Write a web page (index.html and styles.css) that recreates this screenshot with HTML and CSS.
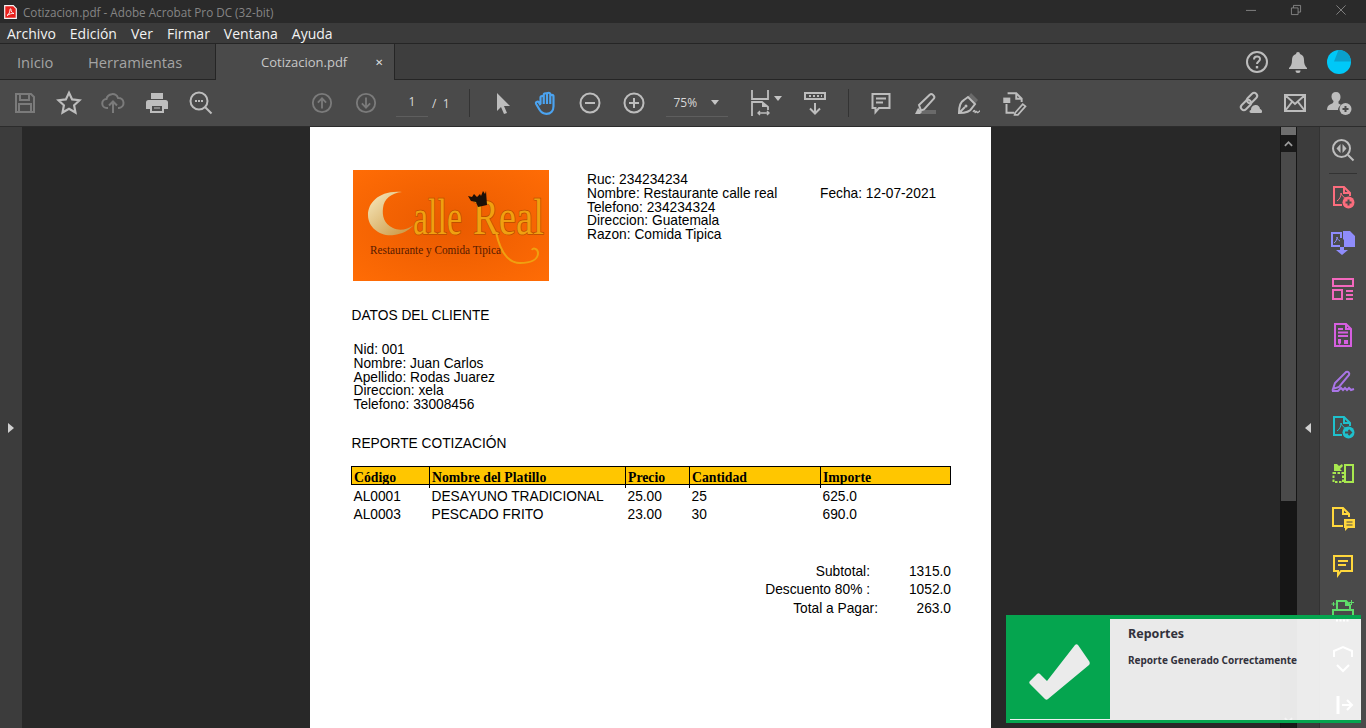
FILE: index.html
```html
<!DOCTYPE html>
<html lang="es">

<head>
    <meta charset="UTF-8">
    <meta name="viewport" content="width=device-width, initial-scale=1.0">
    <title>Cotizacion.pdf - Adobe Acrobat Pro DC (32-bit)</title>
    <link rel="stylesheet" href="styles.css">
</head>

<body>
    <div id="ventana">

        <!-- Barra de titulo -->
        <div id="barraTitulo">
            <svg class="logoAcrobat" viewBox="0 0 13 14" width="13" height="14">
                <path d="M.7.7h8.600l3 3v9.600H.7z" fill="#e8201c" stroke="#f5f5f5" stroke-width="1.200" />
                <path d="M3 10.500c2-1 3-4 3-6 0-1 1-1 1 0 0 2 1 3.500 3 4-2-.2-4.500.3-7 2z" fill="none"
                    stroke="#fff" stroke-width=".9" />
            </svg>
            <span class="tituloTexto">Cotizacion.pdf - Adobe Acrobat Pro DC (32-bit)</span>
            <div class="controles">
                <svg viewBox="0 0 12 12" width="10" height="10">
                    <path d="M0 6.500h12" />
                </svg>
                <svg viewBox="0 0 12 12" width="10" height="10">
                    <path d="M.5 3.500h8v8h-8zM3 3.500V.5h8.500v8H8.500" />
                </svg>
                <svg viewBox="0 0 12 12" width="10" height="10">
                    <path d="M.5.5l11 11M11.500.5l-11 11" />
                </svg>
            </div>
        </div>

        <!-- Menu -->
        <div id="barraMenu">
            <span>Archivo</span>
            <span>Edición</span>
            <span>Ver</span>
            <span>Firmar</span>
            <span>Ventana</span>
            <span>Ayuda</span>
        </div>

        <!-- Pestañas -->
        <div id="barraTabs">
            <span class="tab tabInicio">Inicio</span>
            <span class="tab tabHerramientas">Herramientas</span>
            <div class="tabActiva">
                <span>Cotizacion.pdf</span>
                <span class="tabCerrar">✕</span>
            </div>
            <div class="tabsDerecha">
                <svg class="ic" viewBox="0 0 24 24" width="24" height="24">
                    <circle cx="12" cy="12" r="10" />
                    <path d="M9 9.500c0-4 6-4 6-.5 0 2.500-3 2.500-3 5" />
                    <path class="relleno" d="M10.800 16h2.400v2.400h-2.400z" />
                </svg>
                <svg class="ic" viewBox="0 0 24 24" width="24" height="24">
                    <path class="relleno"
                        d="M12 2a2 2 0 0 1 2 2c3 1 4 3 4 6 0 4 1 6 3 8v1H3v-1c2-2 3-4 3-8 0-3 1-5 4-6a2 2 0 0 1 2-2zM9.500 20.500h5a2.500 2.500 0 0 1-5 0z" />
                </svg>
                <svg viewBox="0 0 24 24" width="24" height="24">
                    <circle cx="12" cy="12" r="12" fill="#00c8f8" />
                    <path d="M7 11.500L11.500 0a12 12 0 0 1 12.500 11.500z" fill="#0aa0cc" />
                </svg>
            </div>
        </div>

        <!-- Barra de herramientas -->
        <div id="barraHerramientas">
            <button class="btn"><svg class="ic apagado" viewBox="0 0 24 24" width="24" height="24">
                    <path d="M3 3h15l3 3v15H3zM7 3v6h9V3M6 21v-8h12v8" />
                </svg></button>
            <button class="btn"><svg class="ic" viewBox="0 0 24 24" width="26" height="26">
                    <path d="M12 2.500l2.900 6.200 6.800.8-5 4.600 1.300 6.700-6-3.400-6 3.400 1.300-6.700-5-4.600 6.800-.8z" />
                </svg></button>
            <button class="btn"><svg class="ic apagado" viewBox="0 0 24 24" width="24" height="24">
                    <path d="M7 17H6a4.500 4.500 0 0 1-.5-9 6 6 0 0 1 11.500-1 5 5 0 0 1 1 10h-1M12 22V11M8 14.500l4-4 4 4" />
                </svg></button>
            <button class="btn"><svg class="ic" viewBox="0 0 24 24" width="24" height="24">
                    <path class="relleno" fill-rule="evenodd"
                        d="M6 2h12v6H6zM3.500 9h17A2.500 2.500 0 0 1 23 11.500V18h-4v4H5v-4H1v-6.500A2.500 2.500 0 0 1 3.500 9zM7 15v5h10v-5zM9 16.500h6v1H9z" />
                </svg></button>
            <button class="btn"><svg class="ic" viewBox="0 0 24 24" width="24" height="24">
                    <circle cx="10" cy="10" r="8.500" />
                    <path d="M16 16l6.500 6.500" />
                    <path class="relleno" d="M6 9h2v2H6zM9 9h2v2H9zM12 9h2v2h-2z" />
                </svg></button>

            <button class="btn btnPagina"><svg class="ic apagado" viewBox="0 0 24 24" width="22" height="22">
                    <circle cx="12" cy="12" r="10" />
                    <path d="M12 18V7M7.500 11.500L12 7l4.500 4.500" />
                </svg></button>
            <button class="btn"><svg class="ic apagado" viewBox="0 0 24 24" width="22" height="22">
                    <circle cx="12" cy="12" r="10" />
                    <path d="M12 6v11M7.500 12.500L12 17l4.500-4.500" />
                </svg></button>
            <div class="paginaCampo">1</div>
            <span class="paginaTotal">/&nbsp; 1</span>
            <span class="separador sepUno"></span>

            <button class="btn"><svg class="ic" viewBox="0 0 24 24" width="24" height="24">
                    <path class="relleno" d="M6 2l13 13h-6l3 7-3 1-3-7-4 4z" />
                </svg></button>
            <button class="btn"><svg class="ic mano" viewBox="0 0 24 24" width="26" height="26">
                    <path
                        d="M6 13V7a1.500 1.500 0 0 1 3 0V4.500a1.500 1.500 0 0 1 3 0V4a1.500 1.500 0 0 1 3 0v2a1.500 1.500 0 0 1 3 0v9c0 4-2.500 7-6.500 7-3 0-5-1.500-6.500-4l-3-5c-1-2 1.500-3 2.500-1.500L6 14M9 7v6M12 4.500V13M15 5v8" />
                </svg></button>
            <button class="btn btnMenos"><svg class="ic" viewBox="0 0 24 24" width="24" height="24">
                    <circle cx="12" cy="12" r="9.500" />
                    <path d="M7 12h10" />
                </svg></button>
            <button class="btn"><svg class="ic" viewBox="0 0 24 24" width="24" height="24">
                    <circle cx="12" cy="12" r="9.500" />
                    <path d="M7 12h10M12 7v10" />
                </svg></button>
            <div class="zoomCampo"><span>75%</span><i class="flechita"></i></div>

            <button class="btn btnAjuste"><svg class="ic" viewBox="0 0 24 28" width="24" height="28">
                    <path d="M4 1v9h16V1M4 27V13h10l6 5v3" stroke-width="1.800" />
                    <path class="relleno" d="M14 13l6 5h-6z" />
                    <path d="M10 24h11M12 22l-2 2 2 2M19 22l2 2-2 2" stroke-width="1.400" />
                </svg><i class="flechita"></i></button>
            <button class="btn btnScroll"><svg class="ic" viewBox="0 0 24 24" width="24" height="24">
                    <path d="M2 2h20v6H2zM12 12v10M7 17.500l5 5 5-5" />
                    <path class="relleno" d="M6 4h2v2H6zM10 4h2v2h-2zM14 4h2v2h-2zM18 4h1v2h-1z" />
                </svg></button>
            <span class="separador sepDos"></span>

            <button class="btn"><svg class="ic" viewBox="0 0 24 24" width="24" height="24">
                    <path d="M3.500 3h17v14H10l-3.500 4v-4h-3zM7 7.500h10M7 11.500h7" />
                </svg></button>
            <button class="btn"><svg class="ic" viewBox="0 0 24 24" width="24" height="24">
                    <path class="apagadoRelleno" d="M8 19h15v4H6z" />
                    <path d="M6 14L17 3.500c1.500-1.500 5.500 1.500 4 4L11 18.500l-3 1z" />
                    <path class="relleno" d="M2 23l3-6 4 4-2 2z" />
                </svg></button>
            <button class="btn"><svg class="ic" viewBox="0 0 24 24" width="24" height="24">
                    <path class="apagadoRelleno" d="M11 6l3-4 7 7-3 4z" />
                    <path d="M2 22c0-6 1-11 5-13l4-3 7 7-3 4c-2 4-7 5-13 5zM2 22l6-6" />
                    <circle class="relleno" cx="9" cy="15" r="1.500" />
                    <path d="M16 21c1-2 2-2 2 0s1.500-2 2 0 2-1 3-1" stroke-width="1.300" />
                </svg></button>
            <button class="btn"><svg class="ic" viewBox="0 0 24 24" width="26" height="26">
                    <path d="M7 3h8l5 5v3M15 3v5h5M6 13v8h7" stroke-width="1.800" />
                    <path class="relleno" d="M3 7h6.500v5H3z" />
                    <path d="M14 21l7-8 2.500 2-7 8h-3z" stroke-width="1.600" />
                </svg></button>

            <div class="barraDerecha">
                <button class="btn"><svg class="ic" viewBox="0 0 26 24" width="26" height="24">
                        <rect x="8" y="4" width="12" height="6" rx="3" transform="rotate(-45 14 7)" />
                        <rect x="2" y="11" width="12" height="6" rx="3" transform="rotate(-45 8 14)" />
                        <path class="relleno" d="M13 22c-2 0-2-3 0-3 0-4 3-5 5-5 2 0 4 2 4 4 2 0 3 4 1 4z" />
                    </svg></button>
                <button class="btn"><svg class="ic" viewBox="0 0 24 24" width="24" height="24">
                        <path d="M2 4h20v16H2zM2 4l10 9 10-9M2 20l7-9M22 20l-7-9" />
                    </svg></button>
                <button class="btn"><svg class="ic" viewBox="0 0 26 24" width="26" height="24">
                        <path class="relleno"
                            d="M10 1c3 0 4.500 2 4.500 5 0 2-1 3.500-2 4.500v2c1 .5 2 1 2.500 1.500-2 1-3 3-3 5H1c0-3 1-5 4-6 2-.7 2.500-1.500 2.500-3-1-1-2-2.500-2-4.500 0-3 1.500-4.500 4.500-4.500z" />
                        <circle class="relleno" cx="19.500" cy="18" r="6" />
                        <path class="signo" d="M16.500 18h6M19.500 15v6" />
                    </svg></button>
            </div>
        </div>

        <!-- Area principal -->
        <div id="principal">
            <div class="lateralIzq"><i class="trianguloDer"></i></div>

            <div id="documento">
                <div class="pagina">
                    <div class="encabezado">
                        <svg class="logoEmpresa" viewBox="0 0 196 111" width="196" height="111">
                            <defs>
                                <radialGradient id="fondoLogo" cx="50%" cy="50%" r="70%">
                                    <stop offset="0" stop-color="#e95a00" />
                                    <stop offset="1" stop-color="#ff6c05" />
                                </radialGradient>
                                <linearGradient id="luna" x1="0" y1="0" x2="1" y2="1">
                                    <stop offset="0" stop-color="#f8ebc0" />
                                    <stop offset="1" stop-color="#c89038" />
                                </linearGradient>
                            </defs>
                            <rect width="196" height="111" fill="url(#fondoLogo)" />
                            <path d="M49 22C26 20 15 33 15 45c0 13 13 22 26 20 8-1 14-4 20-10-7 5-15 6-21 3-9-4-11-12-10-20 1-9 8-15 19-16z"
                                fill="url(#luna)" />
                            <text class="logoLetra" x="60" y="64" textLength="49" lengthAdjust="spacingAndGlyphs">alle</text>
                            <text class="logoLetra" x="120" y="64" textLength="71" lengthAdjust="spacingAndGlyphs">Real</text>
                            <path d="M143 62c3 14 9 31 24 31 10 0 18-3 18-10 0-4-5-6-6-3" fill="none" stroke="#f0a010"
                                stroke-width="2" />
                            <path d="M115 26l4 1 2-3 3 3 3-3 1 2 2-5 2 3 1-3 1 14-9 2-2-5-5-1z" fill="#1c1008" />
                            <text class="logoSub" x="17" y="84" textLength="131" lengthAdjust="spacingAndGlyphs">Restaurante y Comida Tipica</text>
                        </svg>
                        <div class="empresa">
                            <div>Ruc: 234234234</div>
                            <div class="empresaFila"><span class="empresaNombre">Nombre: Restaurante calle real</span><span>Fecha: 12-07-2021</span></div>
                            <div>Telefono: 234234324</div>
                            <div>Direccion: Guatemala</div>
                            <div>Razon: Comida Tipica</div>
                        </div>
                    </div>

                    <div class="seccionTitulo seccionCliente">DATOS DEL CLIENTE</div>
                    <div class="cliente">
                        <div>Nid: 001</div>
                        <div>Nombre: Juan Carlos</div>
                        <div>Apellido: Rodas Juarez</div>
                        <div>Direccion: xela</div>
                        <div>Telefono: 33008456</div>
                    </div>

                    <div class="seccionTitulo seccionReporte">REPORTE COTIZACIÓN</div>
                    <div class="tabla">
                        <div class="fila filaCabecera">
                            <span>Código</span>
                            <span>Nombre del Platillo</span>
                            <span>Precio</span>
                            <span>Cantidad</span>
                            <span>Importe</span>
                        </div>
                        <div class="fila">
                            <span>AL0001</span>
                            <span>DESAYUNO TRADICIONAL</span>
                            <span>25.00</span>
                            <span>25</span>
                            <span>625.0</span>
                        </div>
                        <div class="fila">
                            <span>AL0003</span>
                            <span>PESCADO FRITO</span>
                            <span>23.00</span>
                            <span>30</span>
                            <span>690.0</span>
                        </div>
                    </div>

                    <div class="totales">
                        <span class="totalEtiqueta">Subtotal:</span><span>1315.0</span>
                        <span class="totalEtiqueta">Descuento 80% :</span><span>1052.0</span>
                        <span>Total a Pagar:</span><span>263.0</span>
                    </div>
                </div>
            </div>

            <div class="scroll">
                <div class="scrollTope"></div>
                <div class="scrollFlecha"><svg viewBox="0 0 10 6" width="9" height="6">
                        <path d="M1 5l4-4 4 4" />
                    </svg></div>
                <div class="scrollBarra"></div>
                <div class="scrollFlecha scrollAbajo"><svg viewBox="0 0 10 6" width="9" height="6">
                        <path d="M1 1l4 4 4-4" />
                    </svg></div>
            </div>

            <div class="lateralDer"><i class="trianguloIzq"></i></div>

            <div id="panelDerecho">
                <div class="panelIcono"><svg class="ic" viewBox="0 0 24 24" width="24" height="24">
                        <circle cx="10.500" cy="10.500" r="8.500" />
                        <path d="M17 17l5.500 5.500" />
                        <path class="relleno" d="M9.500 6v9l-4-4.500zM11.500 6v9l4-4.500z" />
                    </svg></div>
                <div class="panelLinea"></div>
                <div class="panelIcono"><svg class="color" style="--c:#fb6d7d" viewBox="0 0 24 24" width="24" height="24">
                        <path d="M11 20H3V2h10l6 6v3M13 2v6h6" />
                        <path d="M6 16c3-2 4-5 4-8 1 3 2 4 5 5" stroke-width="1" />
                        <circle class="lleno" cx="17.500" cy="17.500" r="6" />
                        <path class="hueco" d="M14.500 17.500h6M17.500 14.500v6" />
                    </svg></div>
                <div class="panelIcono"><svg class="color" style="--c:#8f8cfb" viewBox="0 0 24 24" width="24" height="24">
                        <path d="M9 15H1V2h9v5" />
                        <path d="M3 12c2-1 3-4 3-6 .5 2 1 3 3 4" stroke-width="1" />
                        <path class="lleno" d="M12 0h7l5 5v11H13V9l-1-1zM9 16h4v3h4l-6 5-6-5h4z" />
                    </svg></div>
                <div class="panelIcono"><svg class="color" style="--c:#f268bd" viewBox="0 0 24 24" width="24" height="24">
                        <path d="M2 2h20v7H2zM2 13h9v9H2zM15 14h7M15 18h7M15 22h7" />
                    </svg></div>
                <div class="panelIcono"><svg class="color" style="--c:#d65fe0" viewBox="0 0 24 24" width="24" height="24">
                        <path d="M4 1h11l5 5v17H4zM15 1v5h5M7 6h5M7 9.500h10M7 13h10" />
                        <path class="lleno" d="M7 16h3v4l-1.500 2L7 20zM13 17h4v4h-4z" />
                    </svg></div>
                <div class="panelIcono"><svg class="color" style="--c:#a975e6" viewBox="0 0 24 24" width="24" height="24">
                        <path d="M2 20l2-6L15 3c2-1 4 1 3 3L8 18zM1 22h6l3-3 2 2 2-2 2 2 2-2 2 2 3-1" />
                    </svg></div>
                <div class="panelIcono"><svg class="color" style="--c:#1fc0cc" viewBox="0 0 24 24" width="24" height="24">
                        <path d="M11 20H3V2h10l6 6v3M13 2v6h6" />
                        <path d="M6 16c3-2 4-5 4-8 1 3 2 4 5 5" stroke-width="1" />
                        <circle class="lleno" cx="17.500" cy="17.500" r="6" />
                        <path class="hueco" d="M14 17.500h6M17.500 15l2.500 2.500-2.500 2.500" />
                    </svg></div>
                <div class="panelIcono"><svg class="color" style="--c:#a8e84f" viewBox="0 0 24 24" width="24" height="24">
                        <path d="M14 4h8v17h-8z" />
                        <path d="M2.500 12h9.500v9H2.500z" stroke-dasharray="2.500 1.500" />
                        <path class="lleno" d="M3 3h3l2 2 3-2 1 2-3 3 2 2H3z" />
                    </svg></div>
                <div class="panelIcono"><svg class="color" style="--c:#ffd73c" viewBox="0 0 24 24" width="24" height="24">
                        <path d="M12 19H2V1h10l6 6v3M12 1v6h6" />
                        <path class="lleno" d="M13 12h11v9h-7l-3 3v-3h-1z" />
                        <path class="hueco" d="M15.500 15h6M15.500 18h6" stroke-width="1" />
                    </svg></div>
                <div class="panelIcono"><svg class="color" style="--c:#ffd73c" viewBox="0 0 24 24" width="24" height="24">
                        <path d="M3 3h18v15H10l-3 4v-4H3zM7 8h10M7 12h8" />
                    </svg></div>
                <div class="panelIcono"><svg class="color" style="--c:#5fdc6a" viewBox="0 0 24 24" width="24" height="24">
                        <path d="M6 11V2h9l4 4v5M15 2v4h4M2 11h20v7H2z" />
                        <path class="lleno" d="M20 1h1v2h2v1h-2v2h-1V4h-2V3h2zM2 3h1v1.500h1.500v1H3V7H2V5.500H.5v-1H2z" />
                        <path d="M5 21.500h14" stroke="#ffffff" stroke-dasharray="2 1.500" />
                    </svg></div>
                <div class="panelIcono"><svg class="ic iconoBlanco" viewBox="0 0 24 24" width="24" height="24">
                        <path d="M3 12V6l9-4 9 4v6M6 20l6 6 6-6" />
                    </svg></div>
                <div class="panelIcono"><svg class="ic iconoBlanco" viewBox="0 0 24 24" width="24" height="24">
                        <path d="M7 5v18" stroke-width="3" />
                        <path d="M11 14h10M16 9l5 5-5 5" />
                    </svg></div>
            </div>
        </div>

        <!-- Notificacion -->
        <div id="notificacion">
            <div class="notifIcono">
                <svg viewBox="0 0 62 56" width="62" height="56">
                    <path d="M1 37l7-7c1-1 2-1 3 0l7 7L46 1c1-1 2-1 3 0l11 16c1 1.500 1 3 0 4L19 55c-1 1-2 1-3 0L1 40c-1-1-1-2 0-3z"
                        fill="#ebebeb" />
                </svg>
            </div>
            <div class="notifTexto">
                <div class="notifTitulo">Reportes</div>
                <div class="notifMensaje">Reporte Generado Correctamente</div>
            </div>
        </div>
    </div>
</body>

</html>
```

FILE: styles.css
```css
* {
    box-sizing: border-box;
}

body {
    margin: 0;
    font-family: 'Open Sans', sans-serif;
    background-color: #282828;
    overflow: hidden;
}

i {
    display: block;
}

svg {
    overflow: visible;
}

#ventana {
    position: relative;
    display: flex;
    flex-direction: column;
    width: 100%;
    height: 100vh;
    overflow: hidden;
}

/* Iconos */
.ic {
    fill: none;
    stroke: #bdbdbd;
    stroke-width: 2;
}

.ic .relleno {
    fill: #bdbdbd;
    stroke: none;
}

.ic .apagadoRelleno {
    fill: #6a6a6a;
    stroke: none;
}

.ic .signo {
    stroke: #4a4a4a;
}

.ic.apagado {
    stroke: #7b7b7b;
}

.ic.mano {
    stroke: #4ba3f0;
}

.ic.iconoBlanco {
    stroke: #fff;
}

.color {
    fill: none;
    stroke: var(--c);
    stroke-width: 2;
}

.color .lleno {
    fill: var(--c);
    stroke: none;
}

.color .hueco {
    stroke: #4a4a4a;
}

/* Barra de titulo */
#barraTitulo {
    display: flex;
    align-items: center;
    height: 23px;
    padding-left: 4px;
    background-color: #2a2a2a;
}

.logoAcrobat {
    flex: none;
}

.tituloTexto {
    margin-left: 6px;
    font-size: 11.700px;
    color: #858585;
}

.controles {
    display: flex;
    gap: 35px;
    margin-left: auto;
    padding-right: 20px;
    padding-bottom: 3px;
}

.controles svg {
    fill: none;
    stroke: #8f8f8f;
}

/* Menu */
#barraMenu {
    display: flex;
    align-items: center;
    gap: 14px;
    height: 21px;
    padding-left: 7px;
    background-color: #3b3b3b;
    border-bottom: 1px solid #252525;
    font-size: 14px;
    color: #f2f2f2;
}

/* Pestañas */
#barraTabs {
    display: flex;
    align-items: center;
    height: 36px;
    background-color: #3e3e3e;
    border-bottom: 1px solid #252525;
    font-size: 14.700px;
}

.tab {
    color: #a4a4a4;
}

.tabInicio {
    margin-left: 17px;
    width: 71px;
}

.tabHerramientas {
    width: 127px;
}

.tabActiva {
    display: flex;
    align-items: center;
    align-self: stretch;
    width: 180px;
    height: 36px;
    padding-left: 45px;
    background-color: #4a4a4a;
    border-left: 1px solid #252525;
    border-right: 1px solid #252525;
    font-size: 13px;
    color: #c8c8c8;
}

.tabCerrar {
    margin-left: 28px;
    font-size: 10px;
    color: #dcdcdc;
}

.tabsDerecha {
    display: flex;
    align-items: center;
    gap: 17px;
    margin-left: auto;
    padding-right: 15px;
}

/* Barra de herramientas */
#barraHerramientas {
    display: flex;
    align-items: center;
    height: 47px;
    padding-left: 3px;
    background-color: #4a4a4a;
    border-bottom: 1px solid #2c2c2c;
}

.btn {
    display: flex;
    align-items: center;
    justify-content: center;
    flex: none;
    width: 44px;
    height: 44px;
    padding: 0;
    background: none;
    border: 0;
}

.btnPagina {
    margin-left: 77px;
}

.btnMenos {
    margin-left: -1px;
}

.paginaCampo {
    width: 32px;
    height: 28px;
    margin-left: 8px;
    border-bottom: 1px solid #5e5e5e;
    font-size: 12px;
    line-height: 26px;
    text-align: center;
    color: #d8d8d8;
}

.paginaTotal {
    margin-left: 4px;
    font-size: 12px;
    color: #d8d8d8;
}

.separador {
    width: 1px;
    height: 28px;
    background-color: #333;
}

.sepUno {
    margin-left: 19px;
    margin-right: 11px;
}

.sepDos {
    margin-left: 11px;
    margin-right: 10px;
}

.zoomCampo {
    display: flex;
    align-items: center;
    width: 62px;
    height: 28px;
    margin-left: 10px;
    padding-left: 8px;
    border-bottom: 1px solid #5e5e5e;
    font-size: 12px;
    color: #d8d8d8;
}

.flechita {
    width: 0;
    height: 0;
    border-left: 4px solid transparent;
    border-right: 4px solid transparent;
    border-top: 5px solid #c4c4c4;
}

.zoomCampo .flechita {
    margin-left: 14px;
}

.btnAjuste {
    gap: 2px;
    margin-left: 9px;
    width: 56px;
}

.btnAjuste .flechita {
    margin-bottom: 10px;
}

.barraDerecha {
    display: flex;
    margin-left: auto;
    padding-right: 5px;
}

/* Area principal */
#principal {
    display: flex;
    flex: 1;
    min-height: 0;
}

.lateralIzq,
.lateralDer {
    display: flex;
    align-items: center;
    justify-content: center;
    flex: none;
    width: 22px;
    background-color: #3c3c3c;
}

.lateralDer {
    width: 23px;
    border-right: 1px solid #333;
}

.trianguloDer {
    border-top: 5px solid transparent;
    border-bottom: 5px solid transparent;
    border-left: 6px solid #d0d0d0;
}

.trianguloIzq {
    border-top: 5px solid transparent;
    border-bottom: 5px solid transparent;
    border-right: 6px solid #d0d0d0;
}

#documento {
    display: flex;
    flex: 1;
    min-width: 0;
    padding-left: 288px;
    background-color: #282828;
}

.pagina {
    width: 681px;
    height: 100%;
    padding: 43px 40px 0 41px;
    background-color: #fff;
    font-family: 'Liberation Sans', Arial, sans-serif;
    font-size: 13.750px;
    color: #000;
}

.encabezado {
    display: flex;
}

.logoEmpresa {
    flex: none;
    margin-left: 2px;
}

.logoLetra {
    font-family: 'Liberation Serif', serif;
    font-size: 50px;
    fill: #f0a010;
    stroke: #b84e00;
    stroke-width: 1.500px;
    paint-order: stroke;
}

.logoSub {
    font-family: 'Liberation Serif', serif;
    font-size: 13px;
    fill: #571a00;
}

.empresa {
    margin-left: 38px;
    padding-top: 3px;
    line-height: 13.750px;
}

.empresaFila {
    display: flex;
}

.empresaNombre {
    width: 233px;
}

.seccionTitulo {
    height: 16px;
    margin-left: .5px;
    line-height: 16px;
}

.seccionCliente {
    margin-top: 27px;
}

.cliente {
    margin-top: 19px;
    margin-left: 2.500px;
    line-height: 13.750px;
}

.seccionReporte {
    margin-top: 24px;
}

.tabla {
    margin-top: 14px;
}

.fila {
    display: grid;
    grid-template-columns: 78px 196px 64px 131px 131px;
    height: 18px;
    line-height: 18px;
}

.fila span {
    padding-left: 2.500px;
}

.filaCabecera {
    height: 19px;
    margin-bottom: 3px;
    background-color: #ffc600;
    border: 1px solid #000;
    font-family: 'Liberation Serif', serif;
    font-weight: bold;
    line-height: 21px;
}

.filaCabecera span {
    padding-left: 2px;
    border-right: 1px solid #000;
}

.filaCabecera span:last-child {
    border-right: 0;
}

.totales {
    display: grid;
    grid-template-columns: 1fr 73px;
    margin-top: 39px;
    line-height: 18.500px;
    text-align: right;
}

.totalEtiqueta {
    padding-right: 8px;
}

/* Scroll */
.scroll {
    display: flex;
    flex-direction: column;
    flex: none;
    width: 17px;
    padding: 0 1px;
    background-color: #161616;
}

.scrollTope {
    height: 8px;
    background-color: #6e6e6e;
}

.scrollFlecha {
    display: flex;
    align-items: center;
    justify-content: center;
    height: 17px;
    background-color: #1a1a1a;
}

.scrollAbajo {
    margin-top: auto;
}

.scrollFlecha svg {
    fill: none;
    stroke: #9c9c9c;
    stroke-width: 2;
}

.scrollBarra {
    height: 349px;
    background-color: #4a4a4a;
}

/* Panel derecho */
#panelDerecho {
    flex: none;
    width: 46px;
    background-color: #4a4a4a;
}

.panelIcono {
    display: flex;
    align-items: center;
    justify-content: center;
    height: 46px;
}

.panelLinea {
    width: 28px;
    height: 1px;
    margin-left: 9px;
    background-color: #333;
}

/* Notificacion */
#notificacion {
    position: absolute;
    left: 1006px;
    top: 615px;
    display: flex;
    width: 355px;
    height: 108px;
    border-top: 4px solid #05a54f;
    border-bottom: 3px solid #05a54f;
    border-left: 4px solid #05a54f;
    background-color: rgba(255, 255, 255, .9);
}

.notifIcono {
    display: flex;
    align-items: center;
    justify-content: center;
    flex: none;
    width: 100px;
    padding-top: 6px;
    background-color: #05a54f;
    border-bottom: 1px solid #f0f0f0;
}

.notifTexto {
    padding: 7px 0 0 18px;
    color: #32323c;
    font-family: 'Noto Sans', sans-serif;
    font-weight: bold;
}

.notifTitulo {
    font-size: 12.500px;
    line-height: 16px;
}

.notifMensaje {
    margin-top: 11px;
    font-size: 10px;
    line-height: 14px;
}
```
